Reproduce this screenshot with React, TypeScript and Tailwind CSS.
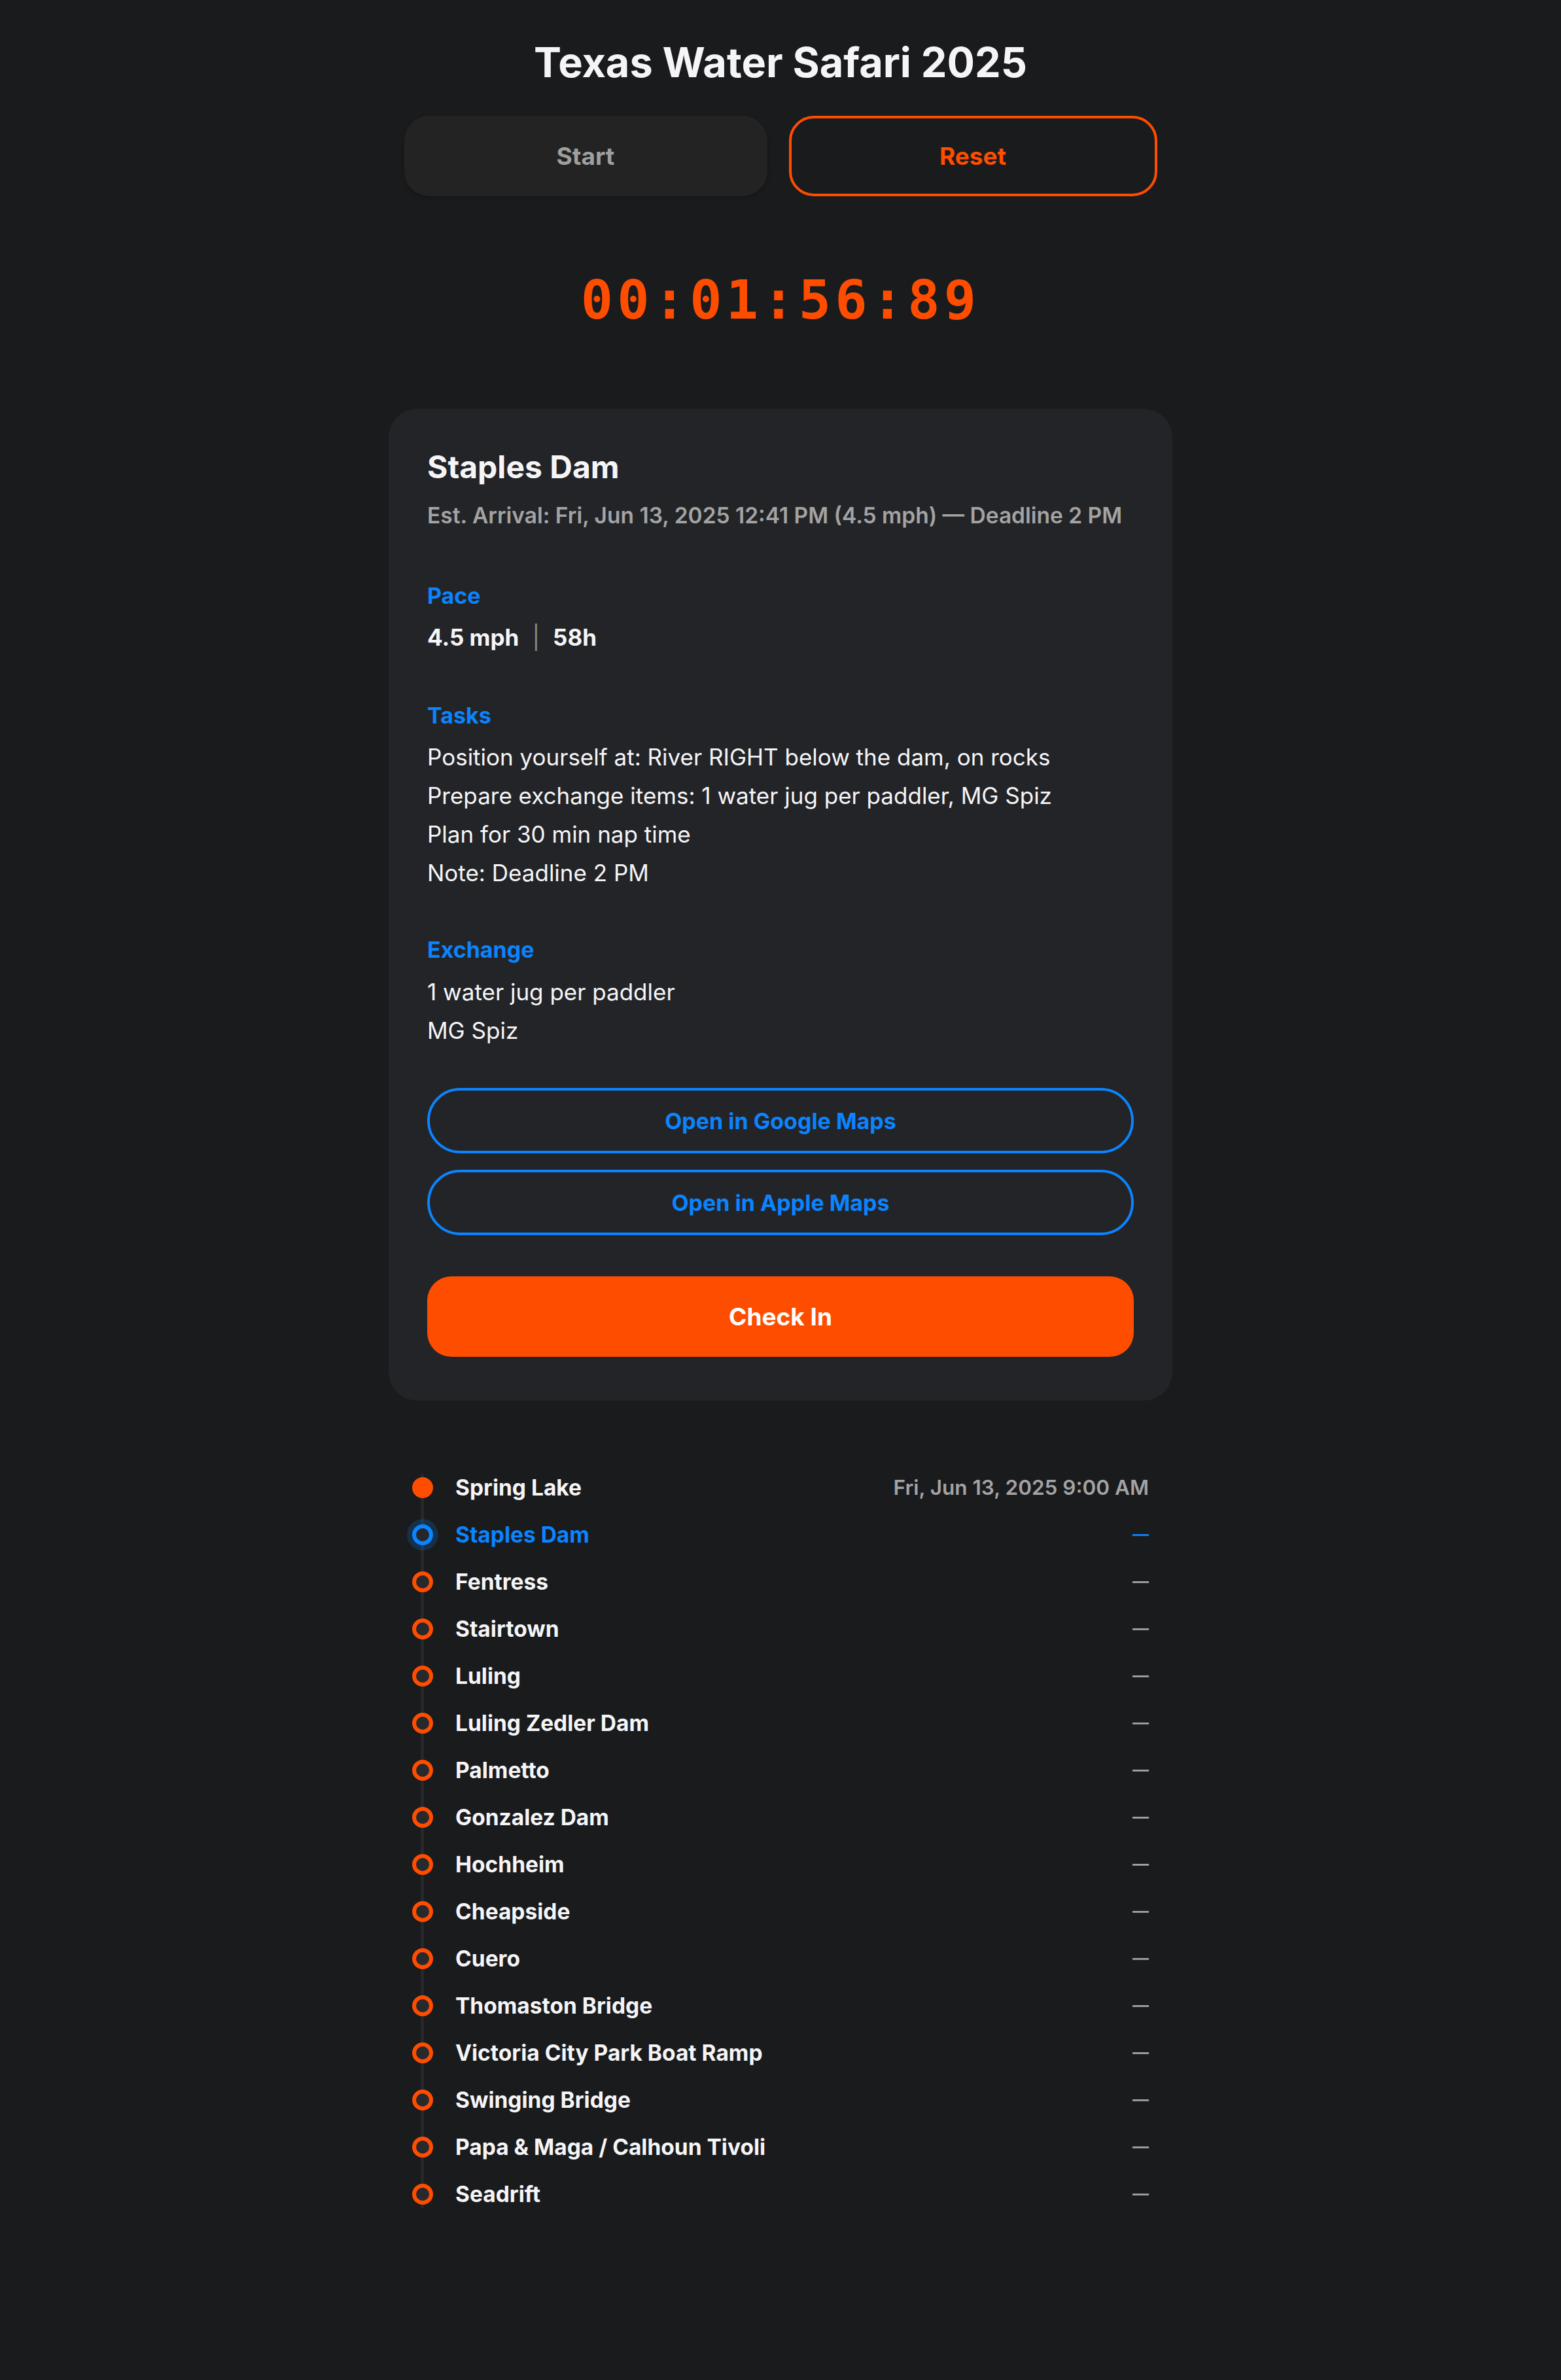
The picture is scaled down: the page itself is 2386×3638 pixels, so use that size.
import React from "react";

type Stop = { name: string; time?: string; status: "done" | "current" | "todo" };

const stops: Stop[] = [
  { name: "Spring Lake", time: "Fri, Jun 13, 2025 9:00 AM", status: "done" },
  { name: "Staples Dam", status: "current" },
  { name: "Fentress", status: "todo" },
  { name: "Stairtown", status: "todo" },
  { name: "Luling", status: "todo" },
  { name: "Luling Zedler Dam", status: "todo" },
  { name: "Palmetto", status: "todo" },
  { name: "Gonzalez Dam", status: "todo" },
  { name: "Hochheim", status: "todo" },
  { name: "Cheapside", status: "todo" },
  { name: "Cuero", status: "todo" },
  { name: "Thomaston Bridge", status: "todo" },
  { name: "Victoria City Park Boat Ramp", status: "todo" },
  { name: "Swinging Bridge", status: "todo" },
  { name: "Papa & Maga / Calhoun Tivoli", status: "todo" },
  { name: "Seadrift", status: "todo" },
];

const tasks = [
  "Position yourself at: River RIGHT below the dam, on rocks",
  "Prepare exchange items: 1 water jug per paddler, MG Spiz",
  "Plan for 30 min nap time",
  "Note: Deadline 2 PM",
];

const exchange = ["1 water jug per paddler", "MG Spiz"];

function Dot({ status }: { status: Stop["status"] }) {
  if (status === "done") return <div className="h-[32px] w-[32px] shrink-0 rounded-full bg-[#ff4d00]" />;
  if (status === "current")
    return (
      <div className="h-[32px] w-[32px] shrink-0 rounded-full border-[6px] border-[#0a84ff] bg-[#26272a] shadow-[0_0_0_8px_rgba(10,132,255,0.2)]" />
    );
  return <div className="h-[32px] w-[32px] shrink-0 rounded-full border-[6px] border-[#ff4d00] bg-[#28292c]" />;
}

export default function App() {
  return (
    <div className="min-h-screen bg-[#1a1b1d] font-['Inter','Noto_Sans',sans-serif] text-[#f5f5f7]">
      <div className="mx-auto w-[1198px] pt-[57px] pb-[240px]">
        <h1 className="text-center text-[63px] font-bold leading-[76px]">Texas Water Safari 2025</h1>

        <div className="mx-auto mt-[44px] flex w-[1151px] gap-[33px]">
          <button className="h-[123px] flex-1 rounded-[38px] bg-[#232323] text-[37px] font-bold text-[#9f9f9f] shadow-[0_2px_6px_rgba(0,0,0,0.25)]">
            Start
          </button>
          <button className="h-[123px] flex-1 rounded-[38px] border-4 border-[#ff4d00] text-[37px] font-bold text-[#ff4d00]">
            Reset
          </button>
        </div>

        <div className="mt-[111px] text-center font-['DejaVu_Sans_Mono',monospace] text-[82px] font-bold leading-[95px] tracking-[0.075em] text-[#ff4d00]">
          00:01:56:89
        </div>

        {/* Current checkpoint */}
        <div className="mt-[119px] rounded-[44px] bg-[#232427] px-[59px] pt-[60px] pb-[67px]">
          <h2 className="text-[48px] font-bold leading-[58px]">Staples Dam</h2>
          <p className="mt-[25px] text-[33.5px] font-semibold leading-[40px] text-[#a3a3a3]">
            Est. Arrival: Fri, Jun 13, 2025 12:41 PM (4.5 mph) — Deadline 2 PM
          </p>

          <div className="mt-[83px] text-[34px] font-bold leading-[40px] text-[#0a84ff]">Pace</div>
          <div className="mt-[14px] text-[35px] font-bold leading-[59px]">
            4.5 mph<span className="mx-[20px] font-normal text-[#8a8a8a]">|</span>58h
          </div>

          <div className="mt-[70px] text-[34px] font-bold leading-[40px] text-[#0a84ff]">Tasks</div>
          <div className="mt-[14px] text-[35px] leading-[59px]">
            {tasks.map((t) => (
              <div key={t}>{t}</div>
            ))}
          </div>

          <div className="mt-[68px] text-[34px] font-bold leading-[40px] text-[#0a84ff]">Exchange</div>
          <div className="mt-[15px] text-[35px] leading-[59px]">
            {exchange.map((t) => (
              <div key={t}>{t}</div>
            ))}
          </div>

          <button className="mt-[58px] flex h-[100px] w-full items-center justify-center rounded-full border-4 border-[#0a84ff] text-[34px] font-bold text-[#0a84ff]">
            Open in Google Maps
          </button>
          <button className="mt-[25px] flex h-[100px] w-full items-center justify-center rounded-full border-4 border-[#0a84ff] text-[34px] font-bold text-[#0a84ff]">
            Open in Apple Maps
          </button>
          <button className="mt-[63px] flex h-[123px] w-full items-center justify-center rounded-[37px] bg-[#ff4d00] text-[37px] font-bold text-white">
            Check In
          </button>
        </div>

        {/* Timeline */}
        <div className="relative mt-[97px] px-[36px]">
          <div className="absolute top-[15px] bottom-[15px] left-[49px] w-[5px] bg-[#27282b]" />
          {stops.map((s) => (
            <div key={s.name} className="relative flex h-[72px] items-center">
              <Dot status={s.status} />
              <span
                className={
                  s.status === "current"
                    ? "ml-[34px] text-[33.5px] font-bold text-[#0a84ff]"
                    : "ml-[34px] text-[33.5px] font-bold text-[#f5f5f7]"
                }
              >
                {s.name}
              </span>
              {s.time ? (
                <span className="ml-auto text-[31.5px] font-semibold text-[#a3a3a3]">{s.time}</span>
              ) : (
                <span
                  className={
                    s.status === "current"
                      ? "ml-auto text-[25px] font-semibold text-[#0a84ff]"
                      : "ml-auto text-[25px] font-semibold text-[#a3a3a3]"
                  }
                >
                  —
                </span>
              )}
            </div>
          ))}
        </div>
      </div>
    </div>
  );
}
